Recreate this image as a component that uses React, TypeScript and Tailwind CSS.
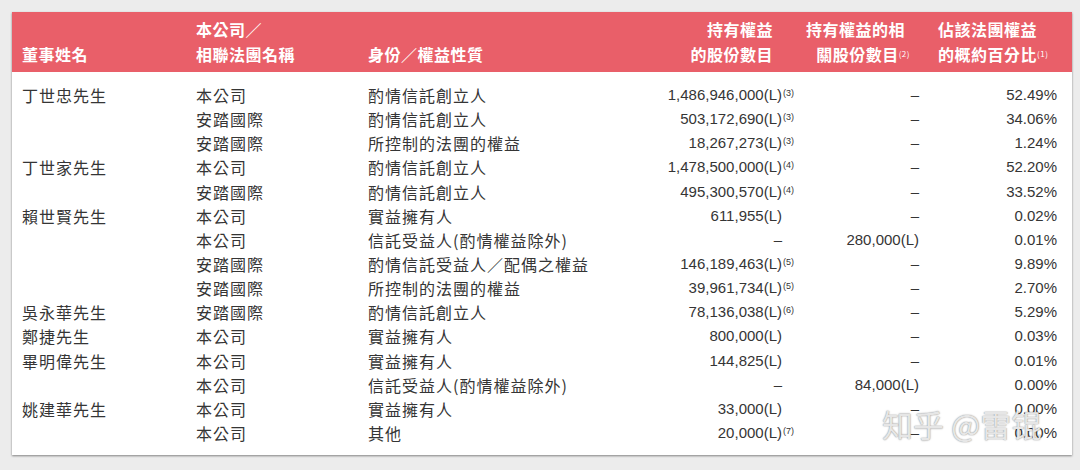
const rows = [
  { name: '丁世忠先生', co: '本公司', role: '酌情信託創立人', shares: '1,486,946,000(L)', note: '(3)', rel: '–', pct: '52.49%' },
  { name: '', co: '安踏國際', role: '酌情信託創立人', shares: '503,172,690(L)', note: '(3)', rel: '–', pct: '34.06%' },
  { name: '', co: '安踏國際', role: '所控制的法團的權益', shares: '18,267,273(L)', note: '(3)', rel: '–', pct: '1.24%' },
  { name: '丁世家先生', co: '本公司', role: '酌情信託創立人', shares: '1,478,500,000(L)', note: '(4)', rel: '–', pct: '52.20%' },
  { name: '', co: '安踏國際', role: '酌情信託創立人', shares: '495,300,570(L)', note: '(4)', rel: '–', pct: '33.52%' },
  { name: '賴世賢先生', co: '本公司', role: '實益擁有人', shares: '611,955(L)', note: '', rel: '–', pct: '0.02%' },
  { name: '', co: '本公司', role: '信託受益人(酌情權益除外)', shares: '–', note: '', rel: '280,000(L)', pct: '0.01%' },
  { name: '', co: '安踏國際', role: '酌情信託受益人／配偶之權益', shares: '146,189,463(L)', note: '(5)', rel: '–', pct: '9.89%' },
  { name: '', co: '安踏國際', role: '所控制的法團的權益', shares: '39,961,734(L)', note: '(5)', rel: '–', pct: '2.70%' },
  { name: '吳永華先生', co: '安踏國際', role: '酌情信託創立人', shares: '78,136,038(L)', note: '(6)', rel: '–', pct: '5.29%' },
  { name: '鄭捷先生', co: '本公司', role: '實益擁有人', shares: '800,000(L)', note: '', rel: '–', pct: '0.03%' },
  { name: '畢明偉先生', co: '本公司', role: '實益擁有人', shares: '144,825(L)', note: '', rel: '–', pct: '0.01%' },
  { name: '', co: '本公司', role: '信託受益人(酌情權益除外)', shares: '–', note: '', rel: '84,000(L)', pct: '0.00%' },
  { name: '姚建華先生', co: '本公司', role: '實益擁有人', shares: '33,000(L)', note: '', rel: '–', pct: '0.00%' },
  { name: '', co: '本公司', role: '其他', shares: '20,000(L)', note: '(7)', rel: '–', pct: '0.00%' },
];

const cjk = "font-['Noto_Sans_CJK_TC','Noto_Sans_CJK_SC',sans-serif]";
const num = "font-['Liberation_Sans',Arial,sans-serif] text-[15px]";
const cols = 'grid grid-cols-[174px_172px_272px_154px_125px_138px]';

export default function App() {
  return (
    <div className="relative h-[470px] w-[1080px] overflow-hidden bg-[#ececec] pl-[12px] pt-[12px]">
      <div className="w-[1060px] bg-white pb-[10px] shadow-[0_1px_2px_rgba(0,0,0,0.45)]">
        {/* header band */}
        <div className={`${cols} ${cjk} bg-[#e95f69] py-[5px] pl-[10px] text-[16px] font-bold leading-[25px] tracking-[0.5px] text-white`}>
          <div className="pt-[25px]">董事姓名</div>
          <div>
            <div>本公司／</div>
            <div>相聯法團名稱</div>
          </div>
          <div className="pt-[25px]">身份／權益性質</div>
          <div className="pr-[21px] text-right">
            <div>持有權益</div>
            <div>的股份數目</div>
          </div>
          <div className="pr-[9px] text-right">
            <div className="pr-[5px]">持有權益的相</div>
            <div>
              關股份數目<sup className="text-[8px] font-normal">(2)</sup>
            </div>
          </div>
          <div className="pl-[19px]">
            <div>佔該法團權益</div>
            <div className="whitespace-nowrap">
              的概約百分比<sup className="text-[8px] font-normal">(1)</sup>
            </div>
          </div>
        </div>

        {/* body rows */}
        <div className="pl-[10px] pt-[11px] text-[#353535]">
          {rows.map((r, i) => (
            <div key={i} className={`${cols} h-[24.15px] items-center leading-[24px]`}>
              <div className={`${cjk} text-[16px] tracking-[1px]`}>{r.name}</div>
              <div className={`${cjk} text-[16px] tracking-[1px]`}>{r.co}</div>
              <div className={`${cjk} whitespace-nowrap text-[16px] tracking-[1px]`}>{r.role}</div>
              <div className="flex h-full justify-end">
                <span className={num}>{r.shares}</span>
                <span className={`${num} mt-[6px] w-[12px] pl-[1px] !text-[9px] leading-[9px]`}>{r.note}</span>
              </div>
              <div className={`${num} text-right`}>{r.rel}</div>
              <div className={`${num} text-right`}>{r.pct}</div>
            </div>
          ))}
        </div>
      </div>

      <div className="absolute left-[882px] top-[404px] font-['Noto_Sans_CJK_SC',sans-serif] text-[31px] leading-[40px] text-[#e6e6e6] [text-shadow:0_0_1.5px_rgba(0,0,0,0.55)]">
        知乎 @雷锟
      </div>
    </div>
  );
}
